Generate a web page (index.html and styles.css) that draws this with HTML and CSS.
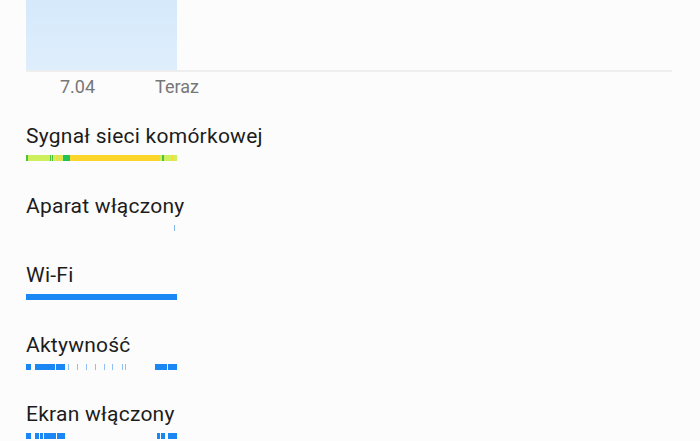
FILE: index.html
```html
<!DOCTYPE html>
<html lang="pl">
<head>
	<meta charset="UTF-8">
	<title>Bateria</title>
	<link rel="stylesheet" href="styles.css">
</head>
<body>
	<div class="page">
		<div class="chart">
			<div class="chart-fill"></div>
		</div>
		<div class="axis">
			<span>7.04</span>
			<span>Teraz</span>
		</div>

		<div class="row">
			<div class="title">Sygnał sieci komórkowej</div>
			<div class="bar bar-signal"></div>
		</div>
		<div class="row">
			<div class="title">Aparat włączony</div>
			<div class="bar bar-camera"></div>
		</div>
		<div class="row">
			<div class="title">Wi-Fi</div>
			<div class="bar bar-wifi"></div>
		</div>
		<div class="row">
			<div class="title">Aktywność</div>
			<div class="bar bar-active"></div>
		</div>
		<div class="row">
			<div class="title">Ekran włączony</div>
			<div class="bar bar-screen"></div>
		</div>
	</div>
</body>
</html>
```

FILE: styles.css
```css
*{
	margin:0;
	padding:0;
	box-sizing:border-box;
}

body{
	background:#fcfcfc;
	font-family:Roboto, "Noto Sans", sans-serif;
	color:#1c1c1c;
}

.page{
	padding-left:26px;
}

/* wykres poziomu baterii */
.chart{
	width:646px;
	height:72px;
	border-bottom:2px solid #eeeeee;
}

.chart-fill{
	width:151px;
	height:100%;
	background:linear-gradient(#d5e9fb, #dfeefc);
}

.axis{
	display:flex;
	gap:60px;
	padding-left:34px;
	margin-top:4px;
	font-size:18px;
	line-height:22px;
	color:#777777;
}

.row{
	margin-top:27px;
	height:42.5px;
}

.axis + .row{
	margin-top:26px;
}

.title{
	font-size:21px;
	line-height:24px;
	letter-spacing:0.25px;
}

.bar{
	width:151px;
	height:6px;
	margin-top:7px;
}

/* zasieg: zielony = dobry, zolty = slaby */
.bar-signal{
	background:linear-gradient(to right,
		#4cbf3c 0, #4cbf3c 2px,
		#cdf05c 2px, #cdf05c 24px,
		#4cbf3c 24px, #4cbf3c 25px,
		#cdf05c 25px, #cdf05c 26px,
		#4cbf3c 26px, #4cbf3c 27px,
		#cdf05c 27px, #cdf05c 30px,
		#f5dc3a 30px, #f5dc3a 32px,
		#cdf05c 32px, #cdf05c 33px,
		#f5dc3a 33px, #f5dc3a 36px,
		#cdf05c 36px, #cdf05c 37px,
		#21c25a 37px, #21c25a 44px,
		#fdd62b 44px, #fdd62b 134px,
		#cdf05c 134px, #cdf05c 136px,
		#4cbf3c 136px, #4cbf3c 138px,
		#cdf05c 138px, #cdf05c 146px,
		#fdd62b 146px, #fdd62b 147px,
		#cdf05c 147px, #cdf05c 151px);
}

.bar-camera{
	background:linear-gradient(to right,
		transparent 0, transparent 148px,
		#84b6ea 148px, #84b6ea 149px,
		transparent 149px);
}

.bar-wifi{
	background:#1a87f2;
}

.bar-active{
	background:linear-gradient(to right,
		#1a87f2 0, #1a87f2 5px,
		transparent 5px, transparent 9px,
		#1a87f2 9px, #1a87f2 29px,
		transparent 29px, transparent 30px,
		#1a87f2 30px, #1a87f2 39px,
		transparent 39px, transparent 42px,
		#8fc0f3 42px, #8fc0f3 43px,
		transparent 43px, transparent 51px,
		#8fc0f3 51px, #8fc0f3 52px,
		transparent 52px, transparent 60px,
		#8fc0f3 60px, #8fc0f3 61px,
		transparent 61px, transparent 69px,
		#8fc0f3 69px, #8fc0f3 70px,
		transparent 70px, transparent 78px,
		#8fc0f3 78px, #8fc0f3 79px,
		transparent 79px, transparent 86px,
		#8fc0f3 86px, #8fc0f3 87px,
		transparent 87px, transparent 96px,
		#8fc0f3 96px, #8fc0f3 97px,
		transparent 97px, transparent 99px,
		#8fc0f3 99px, #8fc0f3 100px,
		transparent 100px, transparent 129px,
		#1a87f2 129px, #1a87f2 141px,
		transparent 141px, transparent 142px,
		#1a87f2 142px, #1a87f2 151px);
}

.bar-screen{
	background:linear-gradient(to right,
		#1a87f2 0, #1a87f2 5px,
		transparent 5px, transparent 9px,
		#1a87f2 9px, #1a87f2 13px,
		transparent 13px, transparent 14px,
		#1a87f2 14px, #1a87f2 17px,
		transparent 17px, transparent 18px,
		#1a87f2 18px, #1a87f2 30px,
		transparent 30px, transparent 31px,
		#1a87f2 31px, #1a87f2 39px,
		transparent 39px, transparent 131px,
		#1a87f2 131px, #1a87f2 134px,
		transparent 134px, transparent 135px,
		#1a87f2 135px, #1a87f2 139px,
		transparent 139px, transparent 142px,
		#1a87f2 142px, #1a87f2 151px);
}
```
